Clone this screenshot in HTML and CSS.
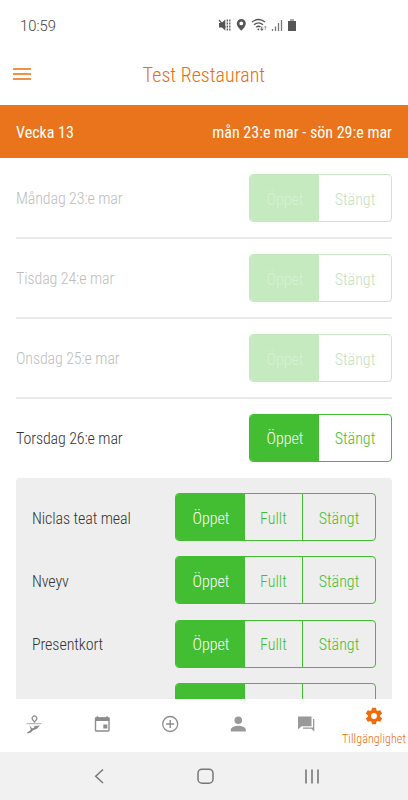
FILE: index.html
```html
<!DOCTYPE html>
<html lang="sv">
<head>
<meta charset="utf-8">
<meta name="viewport" content="width=device-width, initial-scale=1">
<title>Test Restaurant</title>
<link rel="stylesheet" href="styles.css">
</head>
<body>
  <div class="status-bar">
    <span class="time">10:59</span>
    <svg class="status-icons" width="80" height="14" viewBox="0 0 80 14">
      <path d="M1 5h2.500L7.300 1.500v11L4 9.500H1z" fill="#555"/>
      <path d="M1 2l6.500 7.500" stroke="#555" stroke-width="1.200"/>
      <path d="M9.300 1.500v11M11.800 1.500v11" stroke="#555" stroke-width="1.300" stroke-dasharray="2 1"/>
      <path d="M23.300 1a4.500 4.500 0 0 0-4.500 4.500c0 3 4.500 7.300 4.500 7.300s4.500-4.300 4.500-7.300A4.500 4.500 0 0 0 23.300 1zm0 2.500a1.900 1.900 0 1 1 0 3.800 1.900 1.900 0 0 1 0-3.800z" fill="#555" fill-rule="evenodd"/>
      <path d="M34 4Q40.500-1 47 4M36 6.700q4.500-3.700 9 0M38.200 9.200q2.300-1.800 4.300-.3" fill="none" stroke="#555" stroke-width="1.400"/>
      <circle cx="40.300" cy="11.300" r=".9" fill="#555"/>
      <path d="M43.800 8.500v3.800m-1.500-1.500l1.500 1.500 1.500-1.500" fill="none" stroke="#555"/>
      <path d="M47.300 12V8m-1.300 1.500L47.300 8l1.300 1.500" fill="none" stroke="#aaa"/>
      <path d="M54.500 11v2M57.500 8.500V13M60.500 5v8M63.500 2v11" stroke="#777" stroke-width="1.300"/>
      <path d="M70 3h8v10h-8z" fill="#555"/>
      <path d="M72 1h4v2h-4z" fill="#aaa"/>
    </svg>
  </div>

  <div class="header">
    <svg class="menu" width="18" height="12" viewBox="0 0 18 12">
      <path d="M0 1h18M0 6h18M0 11h18" stroke="#ed6c0c" stroke-width="1.700"/>
    </svg>
    <h1>Test Restaurant</h1>
  </div>

  <div class="week">
    <span>Vecka 13</span>
    <span>mån 23:e mar - sön 29:e mar</span>
  </div>

  <div class="content">
    <div class="day disabled">
      <span>Måndag 23:e mar</span>
      <div class="toggle"><button class="open active">Öppet</button><button class="closed">Stängt</button></div>
    </div>
    <div class="day disabled">
      <span>Tisdag 24:e mar</span>
      <div class="toggle"><button class="open active">Öppet</button><button class="closed">Stängt</button></div>
    </div>
    <div class="day disabled">
      <span>Onsdag 25:e mar</span>
      <div class="toggle"><button class="open active">Öppet</button><button class="closed">Stängt</button></div>
    </div>
    <div class="day">
      <span>Torsdag 26:e mar</span>
      <div class="toggle"><button class="open active">Öppet</button><button class="closed">Stängt</button></div>
    </div>

    <div class="meals">
      <div class="meal">
        <span>Niclas teat meal</span>
        <div class="toggle"><button class="open active">Öppet</button><button class="full">Fullt</button><button class="closed">Stängt</button></div>
      </div>
      <div class="meal">
        <span>Nveyv</span>
        <div class="toggle"><button class="open active">Öppet</button><button class="full">Fullt</button><button class="closed">Stängt</button></div>
      </div>
      <div class="meal">
        <span>Presentkort</span>
        <div class="toggle"><button class="open active">Öppet</button><button class="full">Fullt</button><button class="closed">Stängt</button></div>
      </div>
      <div class="meal">
        <span></span>
        <div class="toggle"><button class="open active"></button><button class="full"></button><button class="closed"></button></div>
      </div>
    </div>
  </div>

  <div class="tabs">
    <div class="tab">
      <svg width="18" height="20" viewBox="0 0 18 20">
        <path d="M9.500 8L7.700 5.800a2.300 2.300 0 1 1 3.600 0z" fill="none" stroke="#8c8c8c" stroke-width="1.200"/>
        <path d="M1.500 9.700h15" stroke="#aaa"/>
        <path d="M4.500 11.300l2.500 3 2-.5.500-1.800 5.500-.5-3.500 3.500-3.500 1.200-2 2.300-3.500 1-.5-1 2-1.200 1.800-1.500z" fill="#8c8c8c"/>
      </svg>
    </div>
    <div class="tab">
      <svg width="18" height="18" viewBox="0 0 18 18">
        <path d="M4.500 1.200v2M14 1.200v2" stroke="#8c8c8c" stroke-width="1.500"/>
        <rect x="2.500" y="3" width="13.500" height="13" rx="1" fill="none" stroke="#8c8c8c" stroke-width="1.400"/>
        <path d="M2 2.500h14.500V6H2zM10.300 9.500h4v4h-4z" fill="#8c8c8c"/>
      </svg>
    </div>
    <div class="tab">
      <svg width="18" height="18" viewBox="0 0 18 18">
        <circle cx="9.200" cy="9" r="7.500" fill="none" stroke="#8c8c8c" stroke-width="1.300"/>
        <path d="M9.200 5v8M5.200 9h8" stroke="#8c8c8c" stroke-width="1.400"/>
      </svg>
    </div>
    <div class="tab">
      <svg width="18" height="18" viewBox="0 0 18 18">
        <circle cx="9.300" cy="5.300" r="3.800" fill="#999"/>
        <path d="M1.800 16.500v-2c0-2.500 5-3.800 7.500-3.800s7.500 1.300 7.500 3.800v2z" fill="#999"/>
      </svg>
    </div>
    <div class="tab">
      <svg width="18" height="18" viewBox="0 0 18 18">
        <path d="M1 1.500h13.500v9.800H4.500L1 14.500zM16 4h1.300v12.500l-3-2.700H6v-1.300h10z" fill="#999"/>
      </svg>
    </div>
    <div class="tab selected">
      <svg width="20" height="20" viewBox="0 0 24 24">
        <path d="M19.430 12.980c.04-.32.07-.64.07-.98s-.03-.66-.07-.98l2.110-1.650c.19-.15.24-.42.12-.64l-2-3.460c-.12-.22-.39-.3-.61-.22l-2.490 1c-.52-.4-1.080-.73-1.690-.98l-.38-2.650C14.460 2.180 14.250 2 14 2h-4c-.25 0-.46.18-.49.42l-.38 2.650c-.61.25-1.170.59-1.690.98l-2.490-1c-.23-.09-.49 0-.61.22l-2 3.460c-.13.22-.07.49.12.64l2.110 1.650c-.04.32-.07.65-.07.98s.03.66.07.98l-2.110 1.650c-.19.15-.24.42-.12.64l2 3.460c.12.22.39.3.61.22l2.490-1c.52.4 1.080.73 1.690.98l.38 2.650c.03.24.24.42.49.42h4c.25 0 .46-.18.49-.42l.38-2.650c.61-.25 1.170-.59 1.690-.98l2.490 1c.23.09.49 0 .61-.22l2-3.460c.12-.22.07-.49-.12-.64zM12 15.500a3.500 3.500 0 1 1 0-7 3.500 3.500 0 0 1 0 7z" fill="#ed6c0c"/>
      </svg>
      <span>Tillgänglighet</span>
    </div>
  </div>

  <div class="system-nav">
    <svg width="16" height="16" viewBox="0 0 16 16"><path d="M12 1.500L4.700 8.300 12 15" fill="none" stroke="#777" stroke-width="1.500"/></svg>
    <svg width="18" height="16" viewBox="0 0 18 16"><rect x="1" y="1.200" width="15" height="14" rx="4" fill="none" stroke="#777" stroke-width="1.500"/></svg>
    <svg width="16" height="16" viewBox="0 0 16 16"><path d="M2 1.500v14M8 1.500v14M14 1.500v14" stroke="#777" stroke-width="1.600"/></svg>
  </div>
</body>
</html>
```
FILE: styles.css
```css
* {
    box-sizing: border-box;
}

body {
    font-family: "Roboto Condensed", Roboto, sans-serif;
    font-stretch: 75%;
    font-weight: 300;
    font-size: 16px;
    color: #333;
    background-color: #fff;
    margin: 0;
    height: 800px;
    display: flex;
    flex-direction: column;
    overflow: hidden;
}

.status-bar {
    display: flex;
    align-items: center;
    height: 50px;
    padding-left: 20px;
}

.time {
    font-family: Roboto, sans-serif;
    font-stretch: 100%;
    font-weight: 350;
    font-size: 14.8px;
    width: 198px;
    padding-top: 1px;
    color: #444;
}

.header {
    display: grid;
    grid-template-columns: 18px 1fr 18px;
    align-items: center;
    height: 55px;
    padding: 0 13px;
    padding-bottom: 7px;
}

.header h1 {
    margin: 0;
    padding-top: 1px;
    text-align: center;
    font-size: 20px;
    font-weight: 350;
    color: #ed6c0c;
}

.week {
    display: flex;
    justify-content: space-between;
    align-items: center;
    height: 53px;
    padding-left: 16px;
    padding-right: 16px;
    padding-top: 2px;
    background-color: #ea741b;
    color: #fff;
    font-weight: 380;
}

.content {
    height: 541px;
    flex: none;
    padding: 1px 16px 0;
    overflow: hidden;
}

.day {
    display: flex;
    justify-content: space-between;
    align-items: center;
    height: 80px;
    border-bottom: 2px solid #ebebeb;
}

.day span {
    padding-top: 1px;
    letter-spacing: -0.12px;
}

.day:nth-child(4) {
    height: 79px;
    border-color: transparent;
}

.disabled span {
    color: #bdbdbd;
}

.disabled .toggle {
    opacity: 0.3;
}

.toggle {
    display: flex;
    height: 48px;
    border: 1px solid #43bd32;
    border-radius: 4px;
    overflow: hidden;
}

.toggle button {
    font: inherit;
    color: #43bd32;
    background: none;
    border: none;
    border-left: 1px solid #43bd32;
    padding: 0;
    padding-top: 2px;
    width: 73px;
}

.toggle .open {
    width: 69px;
    margin-right: -1px;
    padding-left: 1px;
    border: none;
}

.toggle .full {
    width: 58px;
}

.toggle .active {
    background-color: #43bd32;
    color: #fff;
}

.disabled .toggle .active {
    color: #7bd16e;
}

.disabled .toggle .closed {
    color: #259b15;
}

.meals {
    background-color: #eee;
    border-radius: 4px;
    padding: 15px 16px;
}

.meal {
    display: flex;
    justify-content: space-between;
    align-items: center;
    margin-bottom: 15.4px;
}

.meal span {
    padding-top: 2px;
    letter-spacing: -0.1px;
}

.tabs {
    display: grid;
    grid-template-columns: repeat(6, 68px);
    height: 53px;
    flex: none;
}

.tab {
    display: flex;
    flex-direction: column;
    align-items: center;
    justify-content: center;
    padding-bottom: 4px;
}

.selected {
    color: #ed6c0c;
    font-size: 12px;
    letter-spacing: 0.1px;
    gap: 6px;
    padding-bottom: 0;
    padding-top: 1px;
}

.system-nav {
    display: flex;
    justify-content: space-between;
    align-items: center;
    height: 48px;
    flex: none;
    padding: 0 88px 0 91px;
    background-color: #f1f1f1;
}
```
